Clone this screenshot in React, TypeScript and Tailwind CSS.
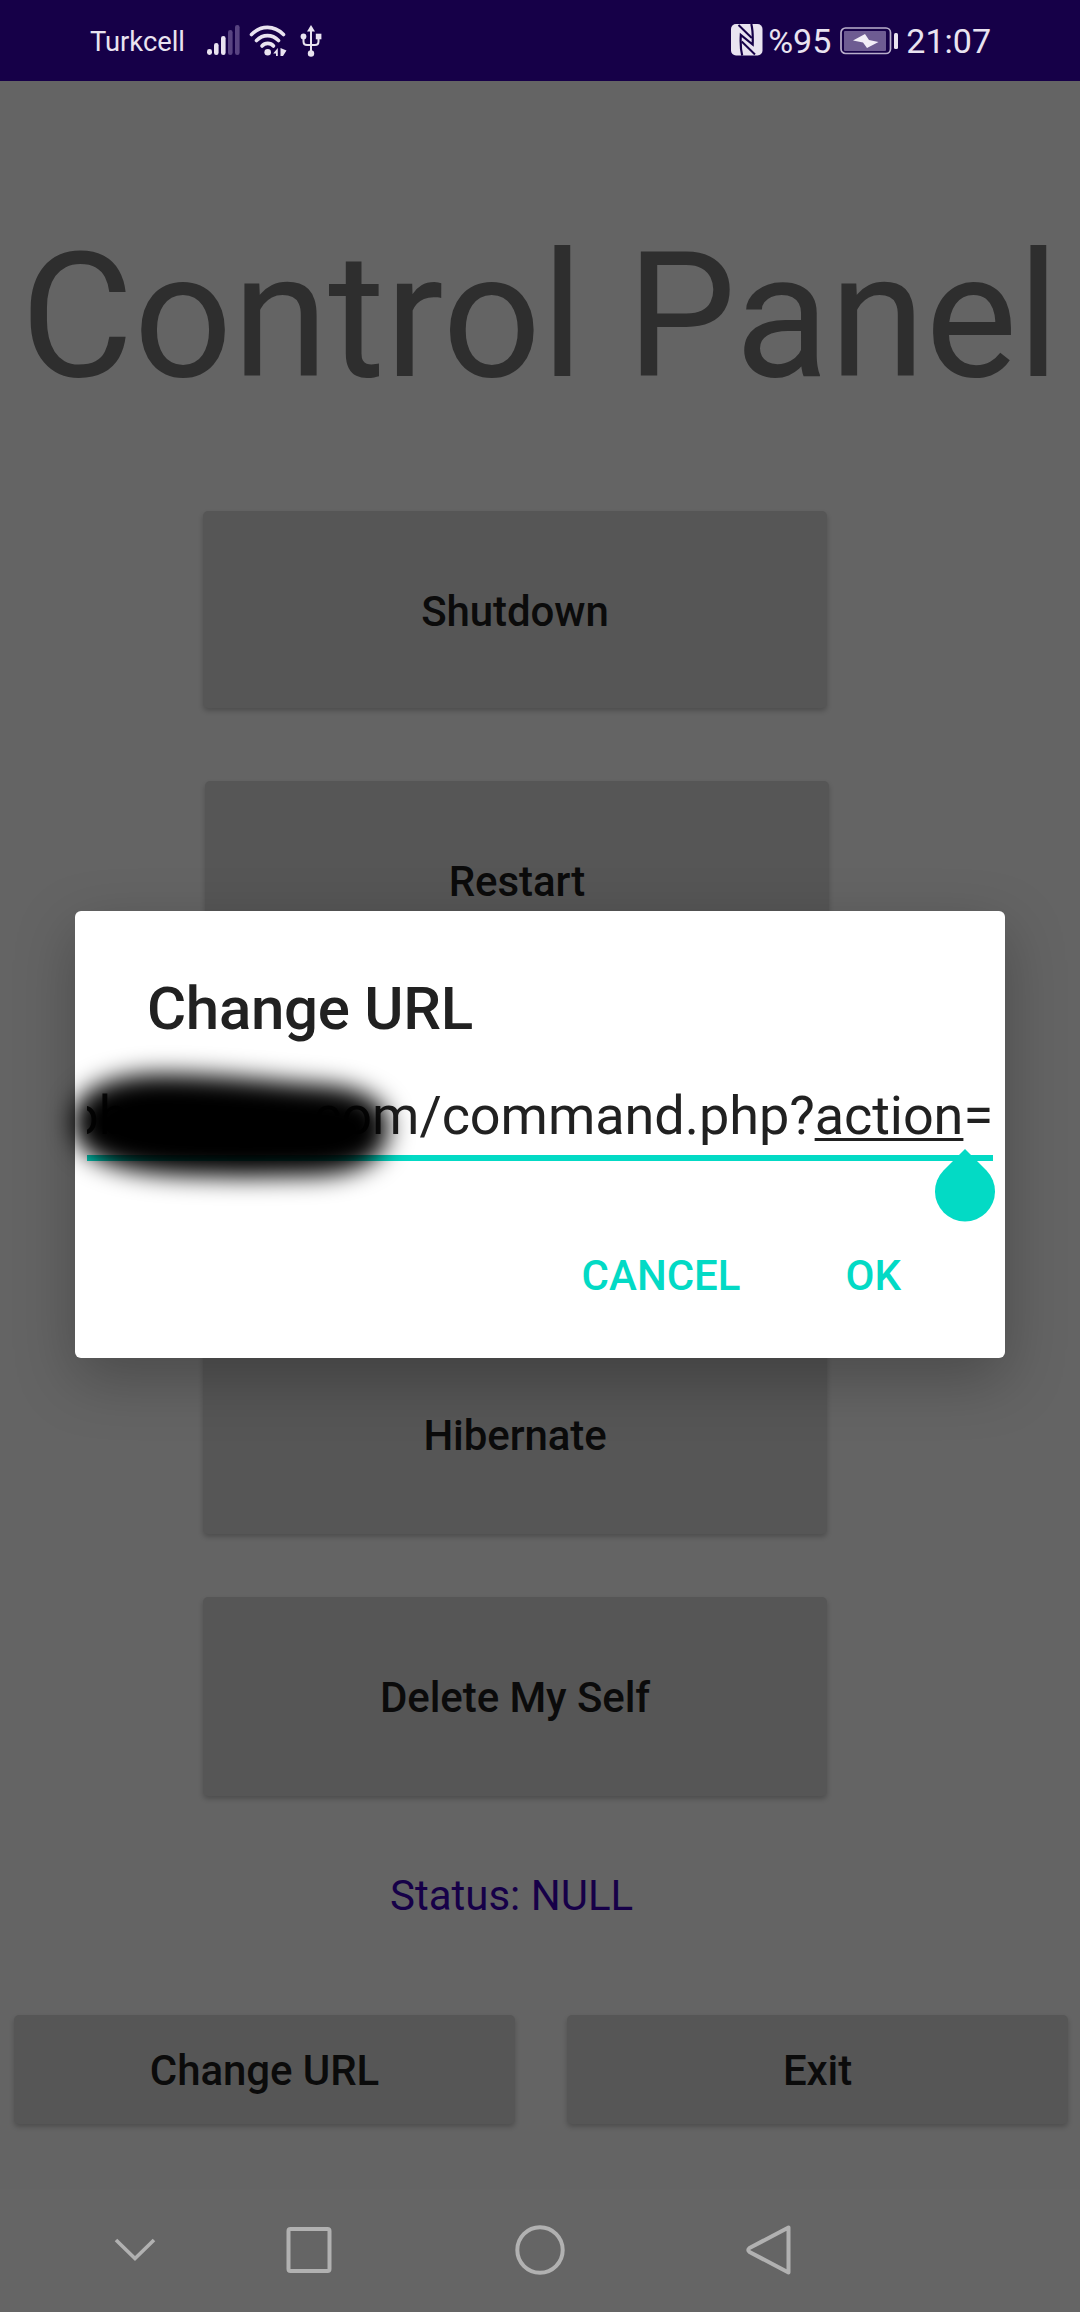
import type { ReactNode } from "react";

function PanelButton({ className, children }: { className: string; children: ReactNode }) {
  return (
    <button
      className={`flex items-center justify-center rounded-[5px] bg-[#565656] text-[42px] font-medium tracking-[-0.08px] text-[#0b0b0b] shadow-[0_3px_5px_rgba(0,0,0,0.22)] ${className}`}
    >
      {children}
    </button>
  );
}

function Signal() {
  return (
    <svg className="ml-[22px] mt-[-1px] h-[32px] w-[34px]" viewBox="0 0 34 32" fill="#e9e3f0">
      <rect x="0" y="25" width="5" height="6" rx="2.4" />
      <rect x="7" y="19" width="4.6" height="12" rx="2.2" />
      <rect x="14" y="12" width="4.6" height="19" rx="2.2" />
      <rect x="21" y="6" width="4.6" height="25" rx="2.2" fill="#584381" />
      <rect x="28" y="1" width="4.6" height="30" rx="2.2" fill="#584381" />
    </svg>
  );
}

function Wifi() {
  return (
    <svg className="ml-[8px] h-[32px] w-[38px]" viewBox="0 0 38 32" fill="none" stroke="#e9e3f0" strokeWidth="3.6" strokeLinecap="round">
      <path d="M2.5 9.5C12 0 25 0 34.5 9.5" />
      <path d="M7.5 15.5C14 9 23 9 29.5 15.5" />
      <path d="M13 21C16 17.5 21.5 17.5 24.5 21" />
      <circle cx="18.7" cy="27.3" r="3.3" fill="#e9e3f0" stroke="none" />
      <path d="M28.8 23V31H27V28.5H24.2ZM31.5 23L37.5 25.5L34 31H31.5Z" fill="#e9e3f0" stroke="none" />
    </svg>
  );
}

function Usb() {
  return (
    <svg className="ml-[13px] h-[32px] w-[22px]" viewBox="0 0 22 32" fill="#e9e3f0">
      <path d="M11 0L15 6.5H7Z" />
      <circle cx="11" cy="28.5" r="3.2" />
      <circle cx="3.5" cy="11.5" r="2.9" />
      <rect x="15.8" y="8.7" width="5.6" height="5.6" />
      <path d="M11 4V28M3.5 12V16.5Q3.5 20 7 20H15Q18.5 20 18.5 16.5V12" fill="none" stroke="#e9e3f0" strokeWidth="2" />
    </svg>
  );
}

function Nfc() {
  return (
    <svg className="mt-[-1px] h-[32px] w-[32px]" viewBox="0 0 32 32">
      <rect x="0" y="0" width="31.5" height="31.5" rx="5" fill="#e9e3f0" />
      <g fill="none" stroke="#160048">
        <path d="M7.5 1L20.8 14" strokeWidth="2" />
        <path d="M24 30.5L10.7 17.5" strokeWidth="2" />
        <path d="M20.3 0C21.6 5 22 11 21.7 20.5L9.8 11C9.4 18 9.5 25 11.2 31.5" strokeWidth="2.2" />
      </g>
    </svg>
  );
}

function Battery() {
  return (
    <svg className="ml-[9px] h-[28px] w-[58px]" viewBox="0 0 58 28">
      <rect x="1" y="1" width="49.5" height="25.5" rx="4.5" fill="none" stroke="#b9aecb" strokeWidth="1.7" />
      <rect x="4" y="4" width="42" height="20" rx="1" fill="#6e5c92" />
      <path d="M25 7L13 13.5L23 15.5L27 21L38.5 15L29 13Z" fill="#f2eef7" />
      <rect x="54" y="6" width="4" height="16" rx="1.5" fill="#e9e3f0" />
    </svg>
  );
}

function StatusBar() {
  return (
    <header className="flex h-[81px] items-center bg-[#160048] pl-[90px] pr-[89px] text-[#e9e3f0]">
      <span className="pt-[2px] text-[27.3px] leading-[82px]">Turkcell</span>
      <Signal />
      <Wifi />
      <Usb />
      <div className="ml-auto flex items-center">
        <Nfc />
        <span className="ml-[5px] text-[34px] leading-[82px]">%95</span>
        <Battery />
        <span className="ml-[8px] text-[34px] leading-[82px]">21:07</span>
      </div>
    </header>
  );
}

function NavBar() {
  return (
    <nav className="mt-auto flex h-[123px] items-center bg-[#656565] pb-[2px]">
      <svg className="ml-[112px] h-[54px] w-[46px]" viewBox="0 0 46 54" fill="none" stroke="#b1b1b1" strokeWidth="3.6">
        <path d="M4 17L23 35.5L42 17" />
      </svg>
      <svg className="ml-[124px] h-[54px] w-[54px]" viewBox="0 0 54 54" fill="none" stroke="#b1b1b1" strokeWidth="4">
        <rect x="6.5" y="6" width="41" height="42" rx="2" />
      </svg>
      <svg className="ml-[177px] h-[54px] w-[54px]" viewBox="0 0 54 54" fill="none" stroke="#b1b1b1" strokeWidth="4">
        <circle cx="27" cy="27" r="22.7" />
      </svg>
      <svg className="ml-[177px] h-[54px] w-[54px]" viewBox="0 0 54 54" fill="none" stroke="#b1b1b1" strokeWidth="4" strokeLinejoin="round">
        <path d="M44.5 4.5V49.5L5.5 29Q3 27 5.5 25Z" />
      </svg>
    </nav>
  );
}

function UrlDialog() {
  return (
    <div
      role="dialog"
      className="absolute left-[75px] top-[911px] flex h-[447px] w-[930px] flex-col rounded-[6px] bg-white shadow-[0_20px_60px_rgba(0,0,0,0.26)]"
    >
      <h2 className="ml-[72px] mt-[63px] h-[70px] text-[60px] font-medium leading-[70px] tracking-[-0.3px] text-[#212121]">Change URL</h2>
      <div className="relative mx-[12px] mt-[32px] flex h-[85px] justify-end overflow-hidden whitespace-nowrap border-b-[6px] border-[#03dac5] text-[54px] leading-[79px] tracking-[-0.05px] text-[#212121]">
        <span>
          ob
          <span className="inline-block w-[170px]" />
          .com/command.php?
          <span className="underline decoration-[3px] underline-offset-[4px] [text-decoration-skip-ink:none]">action</span>=
        </span>
      </div>
      {/* soft black brush hiding the host name */}
      <svg className="absolute left-[-75px] top-[109px] h-[200px] w-[480px] blur-[12px]" viewBox="0 0 480 200">
        <path d="M72 100C74 72 105 55 160 54C215 54 260 60 310 64C365 66 389 82 389 108C387 140 360 156 300 156C270 156 250 158 205 156C130 155 72 144 72 100Z" />
      </svg>
      <svg className="absolute left-[860px] top-[238px] h-[73px] w-[60px]" viewBox="0 0 60 73" fill="#03dac5">
        <path d="M30 0L51.5 21.5A30 30 0 1 1 8.5 21.5Z" />
      </svg>
      <div className="mt-[79px] flex h-[72px] justify-end gap-[105px] pr-[104px] text-[42px] font-medium leading-[72px] text-[#03dac5]">
        <button>CANCEL</button>
        <button>OK</button>
      </div>
    </div>
  );
}

export default function App() {
  return (
    <div className="relative flex h-[2312px] w-[1080px] flex-col overflow-hidden bg-[#646464] font-[Roboto,sans-serif]">
      <StatusBar />
      <main className="flex flex-col">
        <h1 className="mt-[130px] h-[211px] whitespace-nowrap text-center text-[173.6px] leading-[211px] text-[#2e2e2e]">Control Panel</h1>
        <PanelButton className="ml-[203px] mt-[89px] h-[197px] w-[624px] pt-[3px]">Shutdown</PanelButton>
        <PanelButton className="ml-[205px] mt-[73px] h-[197px] w-[624px] pt-[3px]">Restart</PanelButton>
        <PanelButton className="ml-[203px] mt-[358px] h-[198px] w-[624px]">Hibernate</PanelButton>
        <PanelButton className="ml-[203px] mt-[63px] h-[199px] w-[624px] pt-[2px]">Delete My Self</PanelButton>
        <p className="ml-[390px] mt-[70px] h-[60px] text-[42px] leading-[60px] text-[#160048]">Status: NULL</p>
        <div className="mt-[89px] flex gap-[52px] pl-[14px]">
          <PanelButton className="h-[109px] w-[501px] pt-[2px]">Change URL</PanelButton>
          <PanelButton className="h-[109px] w-[501px] pt-[2px]">Exit</PanelButton>
        </div>
      </main>
      <NavBar />
      <UrlDialog />
    </div>
  );
}
